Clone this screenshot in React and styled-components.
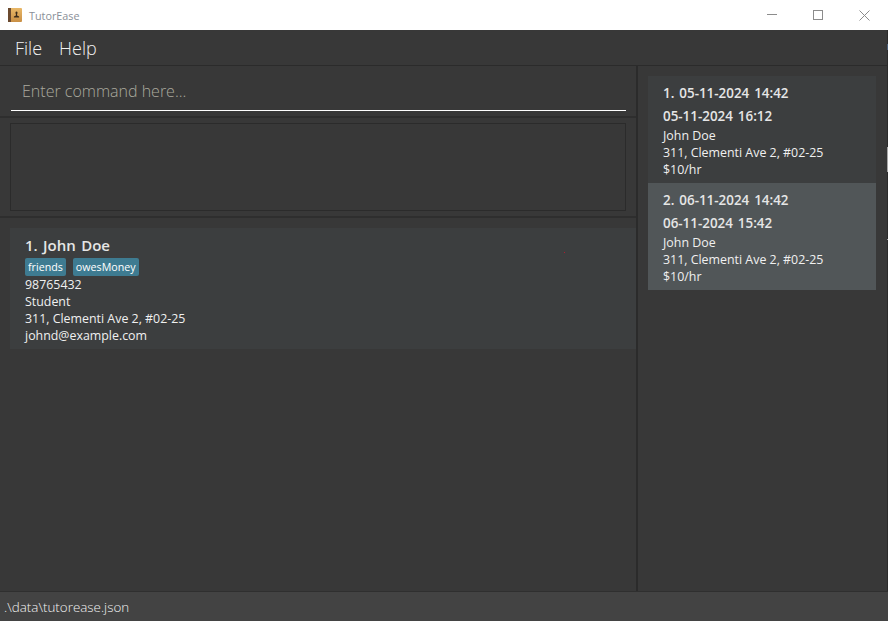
import React from 'react';
import styled, { createGlobalStyle } from 'styled-components';

const GlobalStyle = createGlobalStyle`
  html, body {
    margin: 0;
    padding: 0;
    background: #383838;
  }
  * {
    box-sizing: border-box;
  }
`;

const Window = styled.div`
  position: relative;
  width: 888px;
  height: 621px;
  display: flex;
  flex-direction: column;
  overflow: hidden;
  background: #383838;
  font-family: "Open Sans", "Noto Sans", sans-serif;
  color: #fff;
`;

const TitleBar = styled.div`
  height: 30px;
  flex: none;
  display: flex;
  align-items: center;
  background: #fff;
  padding-left: 8px;
`;

const TitleText = styled.span`
  margin-left: 7px;
  font-size: 10.8px;
  color: #8a8f98;
`;

const WindowButtons = styled.div`
  margin-left: auto;
  padding-right: 1px;
  display: flex;
`;

const WindowButton = styled.div`
  width: 46px;
  height: 30px;
  display: flex;
  align-items: center;
  justify-content: center;
`;

const MenuBar = styled.div`
  height: 36px;
  flex: none;
  display: flex;
  align-items: center;
  gap: 17px;
  padding: 0 0 0 15px;
  border-bottom: 1px solid #2b2b2b;
`;

const MenuItem = styled.span`
  font-size: 18px;
  font-weight: 300;
  color: #f2f2f2;
`;

const Main = styled.div`
  flex: 1;
  min-height: 0;
  display: flex;
`;

const LeftColumn = styled.div`
  width: 636px;
  flex: none;
  display: flex;
  flex-direction: column;
`;

const Splitter = styled.div`
  width: 2px;
  flex: none;
  background: #2b2b2b;
`;

const CommandPane = styled.div`
  height: 50px;
  flex: none;
  padding: 0 10px 5px 11px;
  display: flex;
`;

const CommandInput = styled.div`
  flex: 1;
  display: flex;
  align-items: center;
  padding: 5px 0 0 11px;
  border-bottom: 1px solid #fff;
  font-size: 16px;
  font-weight: 300;
  color: #aaa99e;
`;

const ResultPane = styled.div`
  height: 102px;
  flex: none;
  padding: 5px 10px;
  border-top: 2px solid #2e2e2e;
  border-bottom: 2px solid #2e2e2e;
  display: flex;
`;

const ResultBox = styled.div`
  flex: 1;
  border: 1px solid #2b2b2b;
`;

const PersonPane = styled.div`
  flex: 1;
  padding: 10px 0 0 10px;
`;

const PersonCard = styled.div`
  height: 121px;
  background: #3c3e3f;
  padding: 7px 15px;
  position: relative;
`;

const CardTitle = styled.div`
  font-size: 15px;
  line-height: 21px;
  font-weight: 600;
  color: #e6e6e6;
  word-spacing: 1.5px;
`;

const TagRow = styled.div`
  display: flex;
  gap: 7px;
  margin: 2px 0 0;
`;

const Tag = styled.span`
  height: 18px;
  padding: 0 3px;
  border-radius: 2px;
  background: #3e7b91;
  font-size: 10.7px;
  line-height: 18px;
  color: #fff;
`;

const CardLine = styled.div`
  font-size: 12.4px;
  line-height: 17px;
  color: #f0f0f0;
`;

const RedDot = styled.i`
  position: absolute;
  left: 554px;
  top: 24px;
  width: 1px;
  height: 1px;
  background: #b01c2e;
`;

const SlotPane = styled.div`
  flex: 1;
  padding: 10px 12px 0 10px;
`;

const SlotCard = styled.div`
  height: 107px;
  padding: 6px 15px 0;
  background: ${(p) => (p.$selected ? '#515658' : '#3c3e3f')};
`;

const SlotHeading = styled.div`
  font-size: 13.4px;
  line-height: 23px;
  font-weight: 600;
  color: #e6e6e6;
  word-spacing: 1.5px;
`;

const SlotLines = styled.div`
  margin-top: -1px;
`;

const StatusBar = styled.div`
  height: 30px;
  flex: none;
  display: flex;
  align-items: center;
  padding-left: 4px;
  background: #434343;
  border-top: 1px solid #2f2f2f;
  font-size: 13.4px;
  font-weight: 300;
  color: #f2f2f2;
`;

// Полоска у правого края окна
const EdgeStrip = styled.div`
  position: absolute;
  top: 30px;
  right: 0;
  bottom: 30px;
  width: 1px;
  background: #2b2b2b;
`;

const EdgeMark = styled.i`
  position: absolute;
  left: 0;
  width: 1px;
  top: ${(p) => p.$top}px;
  height: ${(p) => p.$height}px;
  background: ${(p) => p.$color};
`;

// Иконка приложения: коричневая книжка с фигуркой
const AppIcon = () => (
  <svg width="14" height="14" viewBox="0 0 14 14">
    <defs>
      <linearGradient id="cover" x1="0" y1="0" x2="0" y2="1">
        <stop offset="0" stopColor="#e9b868" />
        <stop offset="1" stopColor="#c98f45" />
      </linearGradient>
    </defs>
    <rect x="0" y="0" width="14" height="14" rx="1" fill="url(#cover)" />
    <rect x="0" y="0" width="3" height="14" fill="#6b4a2f" />
    <path d="M8.5 3.5a1.4 1.4 0 0 1 .6 2.4v1.6l2 1v1H5.9v-1l2-1V5.9a1.4 1.4 0 0 1 .6-2.4z" fill="#3a2a1a" />
  </svg>
);

const slots = [
  { id: 1, start: '05-11-2024 14:42', end: '05-11-2024 16:12' },
  { id: 2, start: '06-11-2024 14:42', end: '06-11-2024 15:42', selected: true },
];

const App = () => {
  return (
    <Window>
      <GlobalStyle />
      <TitleBar>
        <AppIcon />
        <TitleText>TutorEase</TitleText>
        <WindowButtons>
          <WindowButton>
            <svg width="10" height="10" viewBox="0 0 10 10"><path d="M0 4.5h10" stroke="#8c8c8c" fill="none" /></svg>
          </WindowButton>
          <WindowButton>
            <svg width="10" height="10" viewBox="0 0 10 10"><rect x="0.5" y="0.5" width="9" height="9" stroke="#8c8c8c" fill="none" /></svg>
          </WindowButton>
          <WindowButton>
            <svg width="11" height="11" viewBox="0 0 11 11"><path d="M0.5 0.5l10 10M10.5 0.5l-10 10" stroke="#8c8c8c" fill="none" /></svg>
          </WindowButton>
        </WindowButtons>
      </TitleBar>
      <MenuBar>
        <MenuItem>File</MenuItem>
        <MenuItem>Help</MenuItem>
      </MenuBar>
      <Main>
        <LeftColumn>
          <CommandPane>
            <CommandInput>Enter command here...</CommandInput>
          </CommandPane>
          <ResultPane>
            <ResultBox />
          </ResultPane>
          <PersonPane>
            <PersonCard>
              <RedDot />
              <CardTitle>1. John Doe</CardTitle>
              <TagRow>
                <Tag>friends</Tag>
                <Tag>owesMoney</Tag>
              </TagRow>
              <CardLine>98765432</CardLine>
              <CardLine>Student</CardLine>
              <CardLine>311, Clementi Ave 2, #02-25</CardLine>
              <CardLine>johnd@example.com</CardLine>
            </PersonCard>
          </PersonPane>
        </LeftColumn>
        <Splitter />
        <SlotPane>
          {slots.map((s) => (
            <SlotCard key={s.id} $selected={s.selected}>
              <SlotHeading>{s.id}. {s.start}</SlotHeading>
              <SlotHeading>{s.end}</SlotHeading>
              <SlotLines>
                <CardLine>John Doe</CardLine>
                <CardLine>311, Clementi Ave 2, #02-25</CardLine>
                <CardLine>$10/hr</CardLine>
              </SlotLines>
            </SlotCard>
          ))}
        </SlotPane>
      </Main>
      <StatusBar>.\data\tutorease.json</StatusBar>
      <EdgeStrip>
        <EdgeMark $top={14} $height={6} $color="#4a5f7a" />
        <EdgeMark $top={117} $height={25} $color="#a8a8a8" />
        <EdgeMark $top={209} $height={1} $color="#a8a8a8" />
      </EdgeStrip>
    </Window>
  );
};

export default App;
